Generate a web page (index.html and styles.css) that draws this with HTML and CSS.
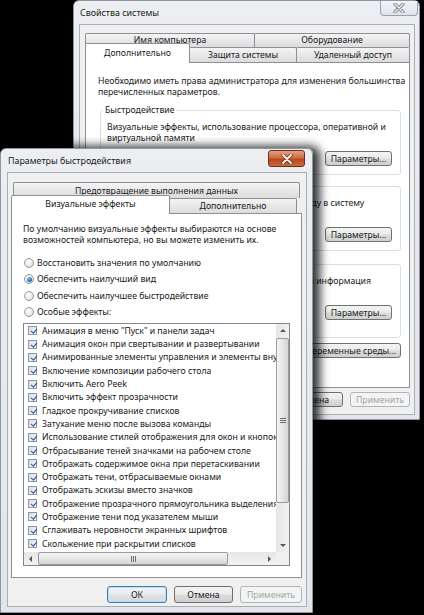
FILE: index.html
```html
<!DOCTYPE html>
<html lang="ru">
<head>
<meta charset="utf-8">
<title>Параметры быстродействия</title>
<link rel="stylesheet" href="styles.css">
</head>
<body>
<div class="desktop">

  <section class="win win-back">
    <header class="titlebar">
      <span class="title">Свойства системы</span>
      <span class="close close-inactive">
        <svg width="12" height="10" viewBox="0 0 12 10"><path d="M2 1 L10 9 M10 1 L2 9" stroke="#7e8791" stroke-width="3.2" stroke-linecap="round"/><path d="M2 1 L10 9 M10 1 L2 9" stroke="#eef0f2" stroke-width="1.4" stroke-linecap="round"/></svg>
      </span>
    </header>
    <div class="client client-back">
      <div class="tabs">
        <div class="tab-row row1-back">
          <div class="tab tb-name">Имя компьютера</div>
          <div class="tab tb-fill">Оборудование</div>
        </div>
        <div class="tab-row row2-back">
          <div class="tab sel sel-back tb-adv">Дополнительно</div>
          <div class="tab tb-prot">Защита системы</div>
          <div class="tab tb-fill">Удаленный доступ</div>
        </div>
      </div>
      <div class="panel panel-back">
        <p class="note">Необходимо иметь права администратора для изменения большинства перечисленных параметров.</p>
        <div class="group g1">
          <span class="legend">Быстродействие</span>
          <p class="gtext">Визуальные эффекты, использование процессора, оперативной и виртуальной памяти</p>
          <div class="gbtns"><button class="btn btn-param">Параметры...</button></div>
        </div>
        <div class="group g2">
          <span class="legend">Профили пользователей</span>
          <p class="gtext">Параметры рабочего стола, относящиеся ко входу в систему</p>
          <div class="gbtns"><button class="btn btn-param">Параметры...</button></div>
        </div>
        <div class="group g3">
          <span class="legend">Загрузка и восстановление</span>
          <p class="gtext">Загрузка и восстановление системы, отладочная информация</p>
          <div class="gbtns"><button class="btn btn-param">Параметры...</button></div>
        </div>
        <div class="env-row"><button class="btn btn-env">Переменные среды...</button></div>
      </div>
      <div class="dlg-btns back-btns">
        <button class="btn btn-dlg">ОК</button>
        <button class="btn btn-dlg">Отмена</button>
        <button class="btn btn-dlg disabled">Применить</button>
      </div>
    </div>
  </section>

  <section class="win win-front">
    <header class="titlebar">
      <span class="title">Параметры быстродействия</span>
      <span class="close close-active">
        <svg width="12" height="10" viewBox="0 0 12 10"><path d="M2 1 L10 9 M10 1 L2 9" stroke="#6a2a16" stroke-width="3.4" stroke-linecap="round"/><path d="M2 1 L10 9 M10 1 L2 9" stroke="#ffffff" stroke-width="1.8" stroke-linecap="round"/></svg>
      </span>
    </header>
    <div class="client client-front">
      <div class="tabs">
        <div class="tab-row row1-front">
          <div class="tab tb-fill">Предотвращение выполнения данных</div>
        </div>
        <div class="tab-row row2-front">
          <div class="tab sel sel-front tb-vis">Визуальные эффекты</div>
          <div class="tab tb-adv2">Дополнительно</div>
        </div>
      </div>
      <div class="panel panel-front">
        <p class="intro">По умолчанию визуальные эффекты выбираются на основе возможностей компьютера, но вы можете изменить их.</p>
        <div class="radios">
          <div class="radio-row"><span class="radio"></span>Восстановить значения по умолчанию</div>
          <div class="radio-row"><span class="radio on"></span>Обеспечить наилучший вид</div>
          <div class="radio-row"><span class="radio"></span>Обеспечить наилучшее быстродействие</div>
          <div class="radio-row"><span class="radio"></span>Особые эффекты:</div>
        </div>
        <div class="listbox">
          <div class="items">
            <div class="item"><span class="chk"></span>Анимация в меню "Пуск" и панели задач</div>
            <div class="item"><span class="chk"></span>Анимация окон при свертывании и развертывании</div>
            <div class="item"><span class="chk"></span>Анимированные элементы управления и элементы внутри окна</div>
            <div class="item"><span class="chk"></span>Включение композиции рабочего стола</div>
            <div class="item"><span class="chk"></span>Включить Aero Peek</div>
            <div class="item"><span class="chk"></span>Включить эффект прозрачности</div>
            <div class="item"><span class="chk"></span>Гладкое прокручивание списков</div>
            <div class="item"><span class="chk"></span>Затухание меню после вызова команды</div>
            <div class="item"><span class="chk"></span>Использование стилей отображения для окон и кнопок</div>
            <div class="item"><span class="chk"></span>Отбрасывание теней значками на рабочем столе</div>
            <div class="item"><span class="chk"></span>Отображать содержимое окна при перетаскивании</div>
            <div class="item"><span class="chk"></span>Отображать тени, отбрасываемые окнами</div>
            <div class="item"><span class="chk"></span>Отображать эскизы вместо значков</div>
            <div class="item"><span class="chk"></span>Отображение прозрачного прямоугольника выделения</div>
            <div class="item"><span class="chk"></span>Отображение тени под указателем мыши</div>
            <div class="item"><span class="chk"></span>Сглаживать неровности экранных шрифтов</div>
            <div class="item"><span class="chk"></span>Скольжение при раскрытии списков</div>
          </div>
          <div class="vscroll">
            <span class="sbtn"><span class="arr arr-up"></span></span>
            <span class="vthumb">
              <svg width="6" height="5" viewBox="0 0 6 5"><path d="M0 0.5H6M0 2.5H6M0 4.5H6" stroke="#6f6f6f" stroke-width="1"/></svg>
            </span>
            <span class="sfill"></span>
            <span class="sbtn"><span class="arr arr-down"></span></span>
          </div>
          <div class="hscroll">
            <span class="sbtn"><span class="arr arr-left"></span></span>
            <span class="hthumb">
              <svg width="5" height="6" viewBox="0 0 5 6"><path d="M0.5 0V6M2.5 0V6M4.5 0V6" stroke="#6f6f6f" stroke-width="1"/></svg>
            </span>
            <span class="sfill"></span>
            <span class="sbtn"><span class="arr arr-right"></span></span>
          </div>
          <div class="corner"></div>
        </div>
      </div>
      <div class="dlg-btns front-btns">
        <button class="btn btn-ok default">ОК</button>
        <button class="btn btn-cancel">Отмена</button>
        <button class="btn btn-apply disabled">Применить</button>
      </div>
    </div>
  </section>

</div>
</body>
</html>
```
FILE: styles.css
```css
* { box-sizing: border-box; }
html, body { margin: 0; padding: 0; }
body {
  width: 424px;
  height: 615px;
  background: #000;
  overflow: hidden;
  font-family: "Noto Sans", "DejaVu Sans", sans-serif;
  font-size: 8.7px;
  color: #202020;
}
p { margin: 0; }
.desktop { position: relative; width: 424px; height: 615px; overflow: hidden; }

/* windows */
.win {
  position: absolute;
  display: flex;
  flex-direction: column;
  border: 1px solid #8e97a1;
  border-radius: 6px 6px 0 0;
  background: linear-gradient(#eceef1, #e2e5e9);
}
.win-back { left: 73px; top: 0; width: 347px; height: 420px; padding: 0 4px 4px 5px; }
.win-front {
  left: 0; top: 148px; width: 313px; height: 465px; padding: 0 5px 5px 6px;
  box-shadow: 4px 1px 10px 3px rgba(0,0,0,.8);
  z-index: 2;
}
.titlebar {
  height: 23px;
  flex: none;
  display: flex;
  align-items: center;
  justify-content: space-between;
  padding-left: 1px;
  font-size: 8.9px;
  color: #1a1a1a;
}
.close {
  align-self: flex-start;
  display: flex;
  align-items: center;
  justify-content: center;
}
.close-inactive {
  width: 38px; height: 15px; margin-right: -3px; margin-top: 0;
  border: 1px solid #9aa3ad; border-top: none;
  border-radius: 0 0 4px 4px;
  background: linear-gradient(#f3f5f7, #dfe3e8);
}
.close-active {
  width: 37px; height: 17px; margin-right: 2px; margin-top: 1px;
  border: 1px solid #6e3018;
  border-radius: 3px;
  background: linear-gradient(#e3a184, #cf6f45 45%, #b9491f 55%, #c86a3d);
}

/* client area */
.client {
  flex: 1;
  display: flex;
  flex-direction: column;
  background: #f0f0f0;
  border: 1px solid #a6aeb7;
}
.client-back { padding: 8px 4px 0 5px; }
.client-front { padding: 9px 4px 0 3px; }

/* tabs */
.tabs { display: flex; flex-direction: column; flex: none; }
.tab-row { display: flex; align-items: flex-end; }
.tab {
  display: flex;
  align-items: center;
  justify-content: center;
  white-space: nowrap;
  border: 1px solid #8c8f97;
  border-bottom: none;
  border-radius: 2px 2px 0 0;
  background: linear-gradient(#f4f4f4, #e8e8e8 50%, #dcdcdc);
  margin-left: -1px;
}
.tab:first-child { margin-left: 0; }
.tab.sel { background: #fff; position: relative; z-index: 1; margin-bottom: -1px; }

.row1-back { height: 14px; }
.row1-back .tab { height: 14px; padding-bottom: 2px; }
.tb-name { width: 170px; }
.tb-fill { flex: 1; }
.row2-back { height: 15px; }
.row2-back .tab { height: 15px; }
.row2-back .sel-back { height: 20px; padding-bottom: 2px; }
.tb-adv { width: 105px; }
.tb-prot { width: 108px; }

.row1-front { height: 16px; padding: 0 2px; }
.row1-front .tab { height: 16px; }
.row2-front { height: 15px; }
.row2-front .tab { height: 15px; }
.row2-front .sel-front { height: 19px; padding-bottom: 2px; }
.tb-vis { width: 159px; }
.tb-adv2 { width: 128px; }

.panel { background: #fff; border: 1px solid #8c8f97; flex: none; }
.panel-back { height: 326px; padding: 13px 0 0 12px; }
.panel-front { height: 365px; padding: 10px 0 0 11px; }

/* back panel */
.note { line-height: 11px; }
.group {
  position: relative;
  width: 301px;
  margin-left: 2px;
  border: 1px solid #d5dfe5;
  border-radius: 3px;
  padding: 11px 8px 8px 6px;
}
.legend {
  position: absolute;
  top: -7px; left: 2px;
  padding: 0 2px;
  background: #fff;
  line-height: 12px;
}
.g1 { margin-top: 12px; }
.g2 { margin-top: 11px; }
.g3 { margin-top: 13px; padding-bottom: 17px; }
.gtext { line-height: 10.5px; min-height: 21px; }
.gbtns { display: flex; justify-content: flex-end; margin-top: 8px; }
.btn-param { width: 67px; }
.env-row { display: flex; justify-content: flex-end; width: 303px; margin-top: 5px; }
.btn-env { width: 100px; }

/* buttons */
.btn {
  font: inherit;
  color: #202020;
  height: 15px;
  padding: 0;
  border: 1px solid #707070;
  border-radius: 3px;
  background: linear-gradient(#f3f3f3, #ebebeb 48%, #dddddd 52%, #cfcfcf);
  display: flex;
  align-items: center;
  justify-content: center;
  white-space: nowrap;
}
.btn.default {
  border-color: #3c7fb1;
  box-shadow: inset 0 0 0 1px #b9dcf2;
  background: linear-gradient(#f2f5f7, #e9edf0 48%, #dde3e8 52%, #d2d9df);
}
.btn.disabled {
  border-color: #b0b5b8;
  background: #f4f4f4;
  color: #9ea5a3;
}
.dlg-btns { display: flex; justify-content: flex-end; flex: none; }
.back-btns { margin-top: 4px; gap: 7px; }
.btn-dlg { width: 60px; }
.front-btns { margin-top: 8px; gap: 7px; }
.front-btns .btn { height: 17px; }
.btn-ok { width: 60px; }
.btn-cancel { width: 59px; }
.btn-apply { width: 62px; }

/* front panel */
.intro { line-height: 11px; }
.radios { margin-top: 9px; }
.radio-row {
  height: 16.3px;
  display: flex;
  align-items: center;
  gap: 3px;
  padding-left: 1px;
  white-space: nowrap;
}
.radio {
  position: relative;
  width: 10px; height: 10px;
  border-radius: 50%;
  border: 1px solid #9a9a9a;
  background: radial-gradient(circle at 40% 35%, #ffffff, #e6e6e6 60%, #cfcfcf);
  flex: none;
}
.radio.on::after {
  content: "";
  position: absolute;
  left: 1.5px; top: 1.5px;
  width: 5px; height: 5px;
  border-radius: 50%;
  background: radial-gradient(circle at 40% 35%, #8ec0ec, #2a6cb4 60%, #154a8a);
}

.listbox {
  margin-top: 3px;
  width: 267px;
  height: 243px;
  border: 1px solid #82878f;
  display: grid;
  grid-template-columns: 252px 13px;
  grid-template-rows: 228px 13px;
  background: #fff;
}
.items { overflow: hidden; }
.item {
  height: 13.3px;
  display: flex;
  align-items: center;
  gap: 5px;
  padding-left: 4px;
  white-space: nowrap;
}
.chk {
  position: relative;
  flex: none;
  width: 9px; height: 9px;
  border: 1px solid #8f979f;
  background: linear-gradient(135deg, #d9dee5, #f6f8fa);
}
.chk::after {
  content: "";
  position: absolute;
  left: 2.5px; top: 0px;
  width: 2.5px; height: 5px;
  border-right: 1.6px solid #2b4f9c;
  border-bottom: 1.6px solid #2b4f9c;
  transform: rotate(40deg);
}

.vscroll, .hscroll {
  display: flex;
  background: linear-gradient(to right, #e6e6e6, #f2f2f2);
}
.vscroll { flex-direction: column; }
.hscroll { flex-direction: row; background: linear-gradient(#e6e6e6, #f2f2f2); }
.corner { background: #f0f0f0; }
.sbtn {
  width: 13px; height: 13px;
  flex: none;
  display: flex;
  align-items: center;
  justify-content: center;
}
.sfill { flex: 1; }
.arr { width: 0; height: 0; border: 3px solid transparent; }
.arr-up { border-bottom-color: #555; border-top-width: 0; }
.arr-down { border-top-color: #555; border-bottom-width: 0; }
.arr-left { border-right-color: #555; border-left-width: 0; }
.arr-right { border-left-color: #555; border-right-width: 0; }
.vthumb {
  margin: 1px 0 0 0;
  height: 165px;
  width: 13px;
  border: 1px solid #9b9b9b;
  border-radius: 2px;
  background: linear-gradient(to right, #f4f4f4, #e6e6e6 50%, #d4d4d4);
  display: flex;
  align-items: center;
  justify-content: center;
}
.hthumb {
  margin-left: 1px;
  width: 190px;
  height: 13px;
  border: 1px solid #9b9b9b;
  border-radius: 2px;
  background: linear-gradient(#f4f4f4, #e6e6e6 50%, #d4d4d4);
  display: flex;
  align-items: center;
  justify-content: center;
}
```
